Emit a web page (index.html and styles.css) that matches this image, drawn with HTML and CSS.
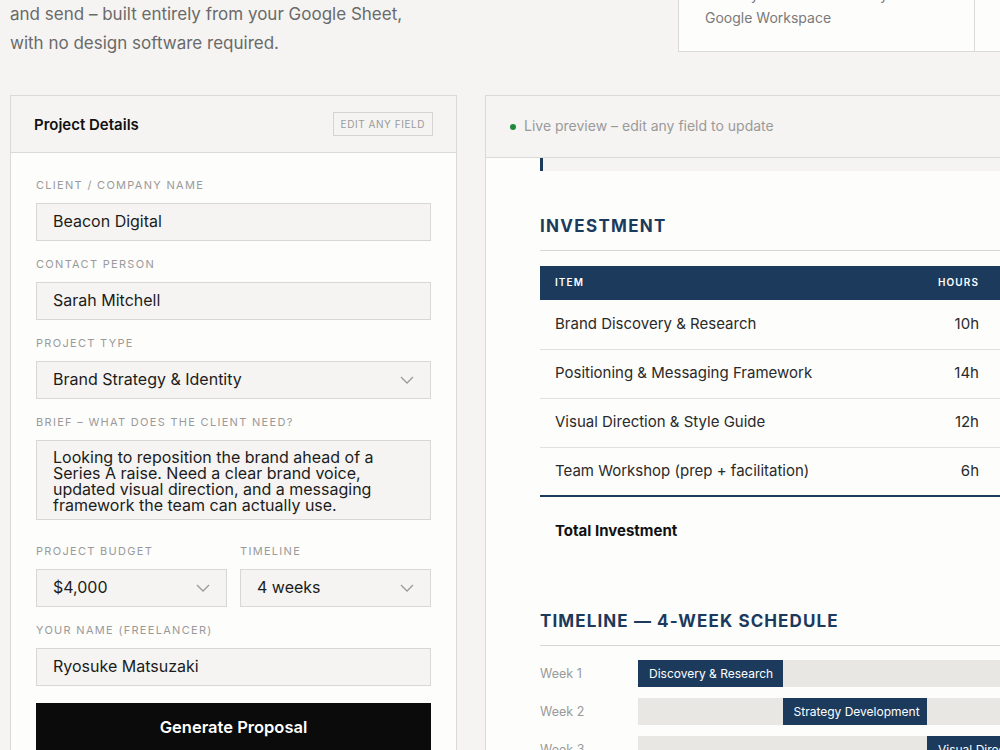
FILE: index.html
```html
<!DOCTYPE html>
<html lang="en">
<head>
<meta charset="utf-8">
<title>Proposal Generator</title>
<link rel="stylesheet" href="styles.css">
</head>
<body>
<div class="page">
  <header class="hero">
    <p class="hero-text">and send – built entirely from your Google Sheet,<br>with no design software required.</p>
    <div class="stat-cards">
      <div class="stat-card">
        <p class="stat-note">Monthly cost – runs entirely on<br>Google Workspace</p>
      </div>
      <div class="stat-card"></div>
    </div>
  </header>

  <main class="workspace">
    <section class="panel form-panel">
      <div class="panel-head">
        <h2 class="panel-title">Project Details</h2>
        <span class="badge">Edit any field</span>
      </div>
      <div class="form-body">
        <div class="field">
          <label class="label">Client / Company Name</label>
          <div class="input">Beacon Digital</div>
        </div>
        <div class="field">
          <label class="label">Contact Person</label>
          <div class="input">Sarah Mitchell</div>
        </div>
        <div class="field">
          <label class="label">Project Type</label>
          <div class="input select">Brand Strategy &amp; Identity
            <svg class="chev" viewBox="0 0 14 8" width="14" height="8"><path d="M1 1l6 6 6-6" fill="none" stroke="#9a9a9a" stroke-width="1.3"/></svg>
          </div>
        </div>
        <div class="field field-brief">
          <label class="label">Brief – What does the client need?</label>
          <div class="input textarea">Looking to reposition the brand ahead of a Series A raise. Need a clear brand voice, updated visual direction, and a messaging framework the team can actually use.</div>
        </div>
        <div class="field-row">
          <div class="field">
            <label class="label">Project Budget</label>
            <div class="input select">$4,000
              <svg class="chev" viewBox="0 0 14 8" width="14" height="8"><path d="M1 1l6 6 6-6" fill="none" stroke="#9a9a9a" stroke-width="1.3"/></svg>
            </div>
          </div>
          <div class="field">
            <label class="label">Timeline</label>
            <div class="input select">4 weeks
              <svg class="chev" viewBox="0 0 14 8" width="14" height="8"><path d="M1 1l6 6 6-6" fill="none" stroke="#9a9a9a" stroke-width="1.3"/></svg>
            </div>
          </div>
        </div>
        <div class="field">
          <label class="label">Your Name (Freelancer)</label>
          <div class="input">Ryosuke Matsuzaki</div>
        </div>
        <button class="generate">Generate Proposal</button>
      </div>
    </section>

    <section class="panel preview-panel">
      <div class="panel-head preview-head">
        <span class="live-dot"></span>
        <span class="live-text">Live preview – edit any field to update</span>
      </div>
      <div class="preview-body">
        <div class="doc">
          <div class="callout"></div>

          <div class="doc-section">
            <h3 class="doc-heading">Investment</h3>
            <table class="invest">
              <colgroup>
                <col class="col-item">
                <col class="col-hours">
                <col class="col-amount">
              </colgroup>
              <thead>
                <tr><th class="c-item">Item</th><th class="c-num">Hours</th><th class="c-num">Amount</th></tr>
              </thead>
              <tbody>
                <tr><td class="c-item">Brand Discovery &amp; Research</td><td class="c-num">10h</td><td class="c-num">$950</td></tr>
                <tr><td class="c-item">Positioning &amp; Messaging Framework</td><td class="c-num">14h</td><td class="c-num">$1,335</td></tr>
                <tr><td class="c-item">Visual Direction &amp; Style Guide</td><td class="c-num">12h</td><td class="c-num">$1,145</td></tr>
                <tr class="last"><td class="c-item">Team Workshop (prep + facilitation)</td><td class="c-num">6h</td><td class="c-num">$570</td></tr>
                <tr class="total"><td class="c-item">Total Investment</td><td class="c-num"></td><td class="c-num">$4,000</td></tr>
              </tbody>
            </table>
          </div>

          <div class="doc-section timeline-section">
            <h3 class="doc-heading">Timeline — 4-Week Schedule</h3>
            <div class="gantt">
              <div class="g-row">
                <span class="g-label">Week 1</span>
                <div class="g-track"><span class="g-bar s1">Discovery &amp; Research</span></div>
              </div>
              <div class="g-row">
                <span class="g-label">Week 2</span>
                <div class="g-track"><span class="g-bar s2">Strategy Development</span></div>
              </div>
              <div class="g-row">
                <span class="g-label">Week 3</span>
                <div class="g-track"><span class="g-bar s3">Visual Direction</span></div>
              </div>
              <div class="g-row">
                <span class="g-label">Week 4</span>
                <div class="g-track"><span class="g-bar s4">Workshop &amp; Handoff</span></div>
              </div>
            </div>
          </div>
        </div>
      </div>
    </section>
  </main>
</div>
</body>
</html>
```

FILE: styles.css
```css
* { box-sizing: border-box; }

html, body {
  margin: 0;
  padding: 0;
  overflow: hidden;
  height: 750px;
}

body {
  background: #f5f4f2;
  font-family: Inter, "Liberation Sans", sans-serif;
  color: #1c1c1c;
}

.page {
  padding: 0 10px;
  width: 1400px;
}

/* hero */
.hero {
  display: flex;
  align-items: flex-start;
}

.hero-text {
  margin: 0;
  width: 668px;
  font-size: 17px;
  line-height: 29px;
  color: #6a6a6a;
}

.stat-cards {
  display: flex;
  margin-top: -44px;
}

.stat-card {
  width: 297px;
  background: #fdfdfc;
  border: 1px solid #dcdad6;
  padding: 26px 26px 22px;
}
.stat-card + .stat-card { border-left: none; }

.stat-note {
  margin: 0;
  font-size: 14px;
  line-height: 23px;
  color: #7a7a7a;
}

/* workspace */
.workspace {
  margin-top: 37px;
  display: grid;
  grid-template-columns: 447px 787px;
  gap: 28px;
  align-items: start;
}

.panel {
  border: 1px solid #dcdad6;
  background: #fdfdfc;
}

.panel-head {
  background: #f5f4f2;
  border-bottom: 1px solid #dcdad6;
  height: 57px;
  display: flex;
  align-items: center;
  justify-content: space-between;
  padding: 0 23px;
}

.panel-title {
  margin: 0;
  font-size: 15px;
  font-weight: 600;
  color: #111;
}

.badge {
  display: flex;
  align-items: center;
  height: 24px;
  font-size: 10px;
  letter-spacing: 0.55px;
  text-transform: uppercase;
  color: #9a9a9a;
  border: 1px solid #d6d4d0;
  padding: 0 7px;
}

.form-body {
  padding: 26px 25px 0;
  height: 600px;
}

.field { margin-bottom: 17px; }
.field-brief { margin-bottom: 25px; }

.label {
  display: block;
  font-size: 11px;
  line-height: 13px;
  letter-spacing: 1.3px;
  text-transform: uppercase;
  color: #9a9a9a;
  margin-bottom: 11px;
  padding-top: 1px;
  margin-top: -1px;
}

.input {
  position: relative;
  height: 38px;
  background: #f5f4f2;
  border: 1px solid #d9d7d3;
  padding: 0 16px;
  font-size: 16px;
  line-height: 35px;
  color: #1c1c1c;
}

.select .chev {
  position: absolute;
  right: 16px;
  top: 14px;
}

.textarea {
  height: 80px;
  padding: 8px 16px;
  line-height: 16px;
}

.field-row {
  display: grid;
  grid-template-columns: 1fr 1fr;
  gap: 13px;
}

.generate {
  display: block;
  width: 100%;
  height: 50px;
  border: none;
  background: #0b0b0b;
  color: #fff;
  font-family: inherit;
  font-size: 16.5px;
  font-weight: 600;
  padding: 0 0 2px;
}

/* preview */
.preview-head {
  height: 62px;
  justify-content: flex-start;
  gap: 8px;
  padding: 0 24px;
}

.live-dot {
  width: 6px;
  height: 6px;
  border-radius: 50%;
  background: #1f8a3a;
}

.live-text {
  font-size: 14px;
  color: #9a9a9a;
  padding-bottom: 2px;
}

.preview-body {
  height: 600px;
  overflow: hidden;
}

.doc {
  padding: 0 55px 0 54px;
  margin-top: -67px;
}

.callout {
  height: 80px;
  background: #f5f4f2;
  border-left: 3px solid #1b3a5c;
}

.doc-section { margin-top: 43px; }
.timeline-section { margin-top: 45px; }

.doc-heading {
  margin: 0;
  font-size: 17px;
  line-height: 24px;
  font-weight: 700;
  letter-spacing: 1.3px;
  text-transform: uppercase;
  color: #1b3a5c;
  padding-bottom: 12px;
  border-bottom: 1px solid #d8d6d2;
}

.timeline-section .doc-heading { letter-spacing: 1.1px; }

.invest {
  margin-top: 15px;
  width: 100%;
  border-collapse: collapse;
  table-layout: fixed;
}

.col-item { width: 354px; }
.col-hours { width: 100px; }

.invest th {
  background: #1b3a5c;
  color: #fff;
  font-size: 10px;
  font-weight: 600;
  letter-spacing: 1.1px;
  text-transform: uppercase;
  height: 34px;
  padding: 0 15px 2px;
}

.invest td {
  font-size: 15px;
  color: #2a2a2a;
  height: 49px;
  padding: 0 15px 2px;
  border-bottom: 1px solid #e3e1dd;
  white-space: nowrap;
}

.invest .c-item { text-align: left; }
.invest .c-num { text-align: right; }

.invest tr.last td { border-bottom: 2px solid #1b3a5c; }

.invest tr.total td {
  border-bottom: none;
  height: 68px;
  padding-top: 2px;
  font-weight: 700;
  color: #111;
}

.gantt {
  margin-top: 14px;
  display: flex;
  flex-direction: column;
  gap: 11px;
}

.g-row {
  display: flex;
  align-items: center;
}

.g-label {
  width: 98px;
  font-size: 12.5px;
  color: #9a9a9a;
}

.g-track {
  width: 578px;
  height: 27px;
  background: #e8e7e4;
  display: grid;
  grid-template-columns: repeat(4, 1fr);
}

.g-bar {
  background: #1b3a5c;
  color: #fff;
  font-size: 12px;
  line-height: 27px;
  padding-left: 11px;
  white-space: nowrap;
}
.s1 { grid-column: 1; }
.s2 { grid-column: 2; }
.s3 { grid-column: 3; }
.s4 { grid-column: 4; }
```
